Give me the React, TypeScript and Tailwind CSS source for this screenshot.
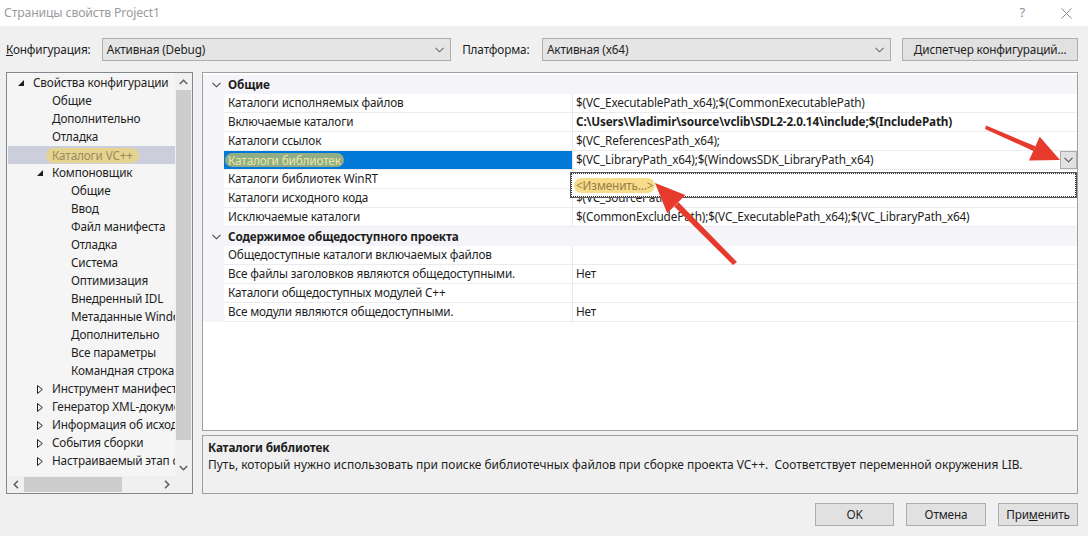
import React from 'react';

const FONT = { fontFamily: '"Noto Sans", "Open Sans", Arial, sans-serif' };

type TreeItem = { label: string; level: number; toggle?: 'open' | 'closed'; selected?: boolean };

const TREE: TreeItem[] = [
  { label: 'Свойства конфигурации', level: 0, toggle: 'open' },
  { label: 'Общие', level: 1 },
  { label: 'Дополнительно', level: 1 },
  { label: 'Отладка', level: 1 },
  { label: 'Каталоги VC++', level: 1, selected: true },
  { label: 'Компоновщик', level: 1, toggle: 'open' },
  { label: 'Общие', level: 2 },
  { label: 'Ввод', level: 2 },
  { label: 'Файл манифеста', level: 2 },
  { label: 'Отладка', level: 2 },
  { label: 'Система', level: 2 },
  { label: 'Оптимизация', level: 2 },
  { label: 'Внедренный IDL', level: 2 },
  { label: 'Метаданные Windows', level: 2 },
  { label: 'Дополнительно', level: 2 },
  { label: 'Все параметры', level: 2 },
  { label: 'Командная строка', level: 2 },
  { label: 'Инструмент манифеста', level: 1, toggle: 'closed' },
  { label: 'Генератор XML-документов', level: 1, toggle: 'closed' },
  { label: 'Информация об исходном коде', level: 1, toggle: 'closed' },
  { label: 'События сборки', level: 1, toggle: 'closed' },
  { label: 'Настраиваемый этап сборки', level: 1, toggle: 'closed' },
];

type Prop = { name: string; value: string; bold?: boolean; selected?: boolean };

const GENERAL: Prop[] = [
  { name: 'Каталоги исполняемых файлов', value: '$(VC_ExecutablePath_x64);$(CommonExecutablePath)' },
  { name: 'Включаемые каталоги', value: 'C:\\Users\\Vladimir\\source\\vclib\\SDL2-2.0.14\\include;$(IncludePath)', bold: true },
  { name: 'Каталоги ссылок', value: '$(VC_ReferencesPath_x64);' },
  { name: 'Каталоги библиотек', value: '$(VC_LibraryPath_x64);$(WindowsSDK_LibraryPath_x64)', selected: true },
  { name: 'Каталоги библиотек WinRT', value: '' },
  { name: 'Каталоги исходного кода', value: '$(VC_SourcePath);' },
  { name: 'Исключаемые каталоги', value: '$(CommonExcludePath);$(VC_ExecutablePath_x64);$(VC_LibraryPath_x64)' },
];

const PUBLIC: Prop[] = [
  { name: 'Общедоступные каталоги включаемых файлов', value: '' },
  { name: 'Все файлы заголовков являются общедоступными.', value: 'Нет' },
  { name: 'Каталоги общедоступных модулей C++', value: '' },
  { name: 'Все модули являются общедоступными.', value: 'Нет' },
];

function Chevron({ className = '' }: { className?: string }) {
  return (
    <svg width="9" height="6" viewBox="0 0 9 6" className={className}>
      <polyline points="0.5,0.8 4.5,4.8 8.5,0.8" fill="none" stroke="currentColor" strokeWidth="1.1" />
    </svg>
  );
}

function ComboBox({ text, width }: { text: string; width: string }) {
  return (
    <div className={`${width} h-[23px] flex items-center justify-between border border-[#adadad] bg-[#e5e5e5] pl-[4px] pr-[6px] text-[#1e1e1e]`}>
      <span>{text}</span>
      <Chevron className="text-[#6d6d6d]" />
    </div>
  );
}

function TreeToggle({ kind }: { kind: 'open' | 'closed' }) {
  if (kind === 'open') {
    return (
      <svg width="6" height="6" viewBox="0 0 6 6">
        <polygon points="6,0 6,6 0,6" fill="#1e1e1e" />
      </svg>
    );
  }
  return (
    <svg width="6" height="9" viewBox="0 0 6 9">
      <polygon points="0.5,0.5 5.3,4.5 0.5,8.5" fill="none" stroke="#1e1e1e" strokeWidth="1" />
    </svg>
  );
}

function PropRow({ p }: { p: Prop }) {
  return (
    <div className="flex h-[19px]">
      <div className="w-[21px] shrink-0 bg-[#f5f5f9]" />
      <div
        className={`w-[348px] shrink-0 flex items-center pl-[4px] border-b border-[#ebebf0] ${
          p.selected ? 'bg-[#0078d7]' : 'bg-white'
        }`}
      >
        {p.selected ? (
          <span className="rounded-full bg-[#8fae87] px-[3px] -ml-[3px] text-[#ece6a6] leading-[14px]">{p.name}</span>
        ) : (
          <span className="whitespace-nowrap">{p.name}</span>
        )}
      </div>
      <div className="flex-1 min-w-0 flex items-center justify-between border-l border-[#e6e6ec] border-b border-b-[#ebebf0] bg-white pl-[3px]">
        <span className={`whitespace-nowrap ${p.bold ? 'font-bold' : ''}`}>{p.value}</span>
        {p.selected && (
          <div className="h-[18px] w-[17px] flex items-center justify-center border border-[#adadad] bg-[#e1e1e1] text-[#555]">
            <Chevron />
          </div>
        )}
      </div>
    </div>
  );
}

function Category({ title, rows }: { title: string; rows: Prop[] }) {
  return (
    <div>
      <div className="flex h-[19px] items-center bg-[#f5f5f9]">
        <div className="w-[25px] flex justify-center pl-[1px] text-[#444]">
          <Chevron />
        </div>
        <span className="font-bold">{title}</span>
      </div>
      {rows.map((r) => (
        <PropRow key={r.name} p={r} />
      ))}
    </div>
  );
}

export default function App() {
  return (
    <div
      style={FONT}
      className="relative w-[1088px] h-[536px] overflow-hidden bg-[#f0f0f0] text-[11.75px] tracking-[-0.15px] text-[#1e1e1e] flex flex-col"
    >
      {/* Title bar */}
      <div className="h-[26px] shrink-0 bg-white flex items-center justify-between pl-[4px] pr-[16px]">
        <span className="text-[#9a9a9a] text-[12.25px]">Страницы свойств Project1</span>
        <div className="flex items-center gap-[36px] text-[#8a8a8a]">
          <span className="text-[13px]">?</span>
          <svg width="11" height="11" viewBox="0 0 11 11">
            <path d="M0.5 0.5 L10.5 10.5 M10.5 0.5 L0.5 10.5" stroke="#8a8a8a" strokeWidth="1" />
          </svg>
        </div>
      </div>

      <div className="flex-1 flex flex-col pl-[6px] pr-[10px] pt-[12px]">
        {/* Configuration row */}
        <div className="flex items-center h-[23px]">
          <span className="w-[96px]">
            <span className="underline">К</span>онфигурация:
          </span>
          <ComboBox text="Активная (Debug)" width="w-[350px]" />
          <span className="ml-[11px] w-[80px]">Платформа:</span>
          <ComboBox text="Активная (x64)" width="w-[350px]" />
          <div className="ml-[11px] w-[176px] h-[23px] flex items-center justify-center border border-[#adadad] bg-[#e1e1e1]">
            <span>
              <span className="underline">Д</span>испетчер конфигураций...
            </span>
          </div>
        </div>

        {/* Main area */}
        <div className="mt-[11px] flex gap-[9px] h-[422px]">
          {/* Tree */}
          <div className="w-[187px] shrink-0 border border-[#828790] bg-[#f5f5f5] flex flex-col">
            <div className="flex flex-1 min-h-0">
              <div className="flex-1 min-w-0 overflow-hidden pl-[1px] pt-[1px]">
                {TREE.map((t, i) => (
                  <div
                    key={i}
                    className={`h-[18px] flex items-center whitespace-nowrap ${t.selected ? 'bg-[#cccedb]' : ''}`}
                    style={{ paddingLeft: 10 + t.level * 19 }}
                  >
                    <div className="w-[15px] shrink-0 flex items-center">
                      {t.toggle && <TreeToggle kind={t.toggle} />}
                    </div>
                    {t.selected ? (
                      <span className="rounded-full bg-[#e5d48f] px-[6px] -ml-[6px] text-[#9a8a60] leading-[15px]">{t.label}</span>
                    ) : (
                      <span>{t.label}</span>
                    )}
                  </div>
                ))}
              </div>
              {/* Vertical scrollbar */}
              <div className="w-[17px] shrink-0 bg-[#f0f0f0] flex flex-col items-center">
                <div className="h-[17px] flex items-center justify-center text-[#606060]">
                  <svg width="9" height="6" viewBox="0 0 9 6">
                    <polyline points="0.8,5 4.5,1.3 8.2,5" fill="none" stroke="currentColor" strokeWidth="1.6" />
                  </svg>
                </div>
                <div className="w-[15px] h-[350px] bg-[#cdcdcd]" />
                <div className="flex-1" />
                <div className="h-[17px] flex items-center justify-center text-[#606060]">
                  <svg width="9" height="6" viewBox="0 0 9 6">
                    <polyline points="0.8,1 4.5,4.7 8.2,1" fill="none" stroke="currentColor" strokeWidth="1.6" />
                  </svg>
                </div>
              </div>
            </div>
            {/* Horizontal scrollbar */}
            <div className="h-[17px] shrink-0 flex bg-[#f0f0f0]">
              <div className="w-[17px] flex items-center justify-center text-[#606060]">
                <svg width="6" height="9" viewBox="0 0 6 9">
                  <polyline points="5,0.8 1.3,4.5 5,8.2" fill="none" stroke="currentColor" strokeWidth="1.6" />
                </svg>
              </div>
              <div className="w-[98px] my-[1px] bg-[#cdcdcd]" />
              <div className="flex-1" />
              <div className="w-[17px] flex items-center justify-center text-[#606060]">
                <svg width="6" height="9" viewBox="0 0 6 9">
                  <polyline points="1,0.8 4.7,4.5 1,8.2" fill="none" stroke="currentColor" strokeWidth="1.6" />
                </svg>
              </div>
              <div className="w-[17px]" />
            </div>
          </div>

          {/* Right column */}
          <div className="flex-1 min-w-0 flex flex-col gap-[4px]">
            <div className="relative h-[359px] border border-[#a0a0a0] bg-white overflow-hidden pt-[2px]">
              <Category title="Общие" rows={GENERAL} />
              <Category title="Содержимое общедоступного проекта" rows={PUBLIC} />

              {/* Drop-down editor popup */}
              <div className="absolute left-[367px] right-0 top-[99px] h-[26px] border border-[#5a5a5a] bg-white">
                <div className="h-full border border-dotted border-[#333] flex items-center pl-[2px]">
                  <span className="rounded-full bg-[#f7dc8c] px-[2px] text-[#9a7c44] leading-[15px]">&lt;Изменить...&gt;</span>
                </div>
              </div>
            </div>

            <div className="h-[59px] border border-[#a0a0a0] bg-[#f0f0f0] px-[5px] pt-[2px]">
              <div className="font-bold leading-[18px]">Каталоги библиотек</div>
              <div className="leading-[18px] text-[11.95px] tracking-normal">
                Путь, который нужно использовать при поиске библиотечных файлов при сборке проекта VC++.&nbsp; Соответствует переменной окружения LIB.
              </div>
            </div>
          </div>
        </div>

        {/* Dialog buttons */}
        <div className="mt-[9px] flex justify-end gap-[12px]">
          <div className="w-[79px] h-[23px] flex items-center justify-center border border-[#adadad] bg-[#e1e1e1]">OK</div>
          <div className="w-[80px] h-[23px] flex items-center justify-center border border-[#adadad] bg-[#e1e1e1]">Отмена</div>
          <div className="w-[80px] h-[23px] flex items-center justify-center border border-[#adadad] bg-[#e1e1e1]">
            <span>
              При<span className="underline">м</span>енить
            </span>
          </div>
        </div>
      </div>

      {/* Red annotation arrows */}
      <svg className="absolute left-0 top-0 pointer-events-none" width="1088" height="536">
        <polygon points="986,125.5 1035.4,146.3 1033.4,150.9 985,129" fill="#e63a2d" />
        <polygon points="1060,160 1029,160.5 1039.7,136.7" fill="#e63a2d" />
        <polygon points="737,262 678.5,202.3 674.3,206.4 733,265" fill="#e63a2d" />
        <polygon points="655,183 685.4,194.9 667.2,213.3" fill="#e63a2d" />
      </svg>
    </div>
  );
}
